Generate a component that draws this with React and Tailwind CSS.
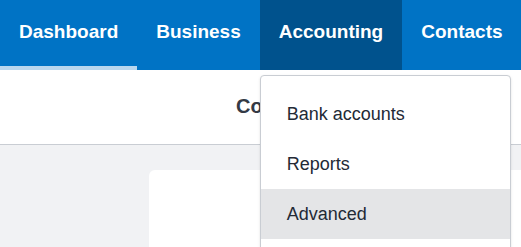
import React from 'react';

const tabs = [
  { label: 'Dashboard', active: true },
  { label: 'Business' },
  { label: 'Accounting', open: true },
  { label: 'Contacts' },
];

const menuItems = [
  { label: 'Bank accounts' },
  { label: 'Reports' },
  { label: 'Advanced', hover: true },
];

export default function App() {
  return (
    <div className="w-[521px] h-[247px] overflow-hidden bg-[#f1f2f4] font-['Liberation_Sans',Arial,sans-serif]">
      {/* Top nav */}
      <div className="flex h-[70px] bg-[#0073c5] text-white">
        {tabs.map((t) => (
          <div
            key={t.label}
            className={`relative flex items-center px-[19px] pb-[6px] text-[19px] font-bold shrink-0 ${
              t.open ? 'bg-[#00528d]' : ''
            }`}
          >
            {t.label}
            {t.active && <div className="absolute left-0 right-0 bottom-0 h-[4px] bg-[#b9d7ef]" />}
            {t.open && (
              <div className="absolute z-10 left-0 top-[75px] w-[251px] h-[200px] bg-white border border-[#c9cdd3] rounded-[4px] shadow-sm pt-[13px] font-normal text-[18px] text-[#232a36]">
                {menuItems.map((m) => (
                  <div
                    key={m.label}
                    className={`h-[50px] flex items-center px-[26px] ${m.hover ? 'bg-[#e4e5e7]' : ''}`}
                  >
                    {m.label}
                  </div>
                ))}
              </div>
            )}
          </div>
        ))}
      </div>

      {/* Page header */}
      <div className="h-[75px] bg-white border-b border-[#c9cdd3] flex items-center pl-[236px] pb-[2px]">
        <span className="text-[20px] font-bold text-[#343a45] whitespace-nowrap">Company settings</span>
      </div>

      {/* Content */}
      <div className="pl-[149px] pt-[25px]">
        <div className="w-[400px] h-[120px] bg-white rounded-[6px]" />
      </div>
    </div>
  );
}
